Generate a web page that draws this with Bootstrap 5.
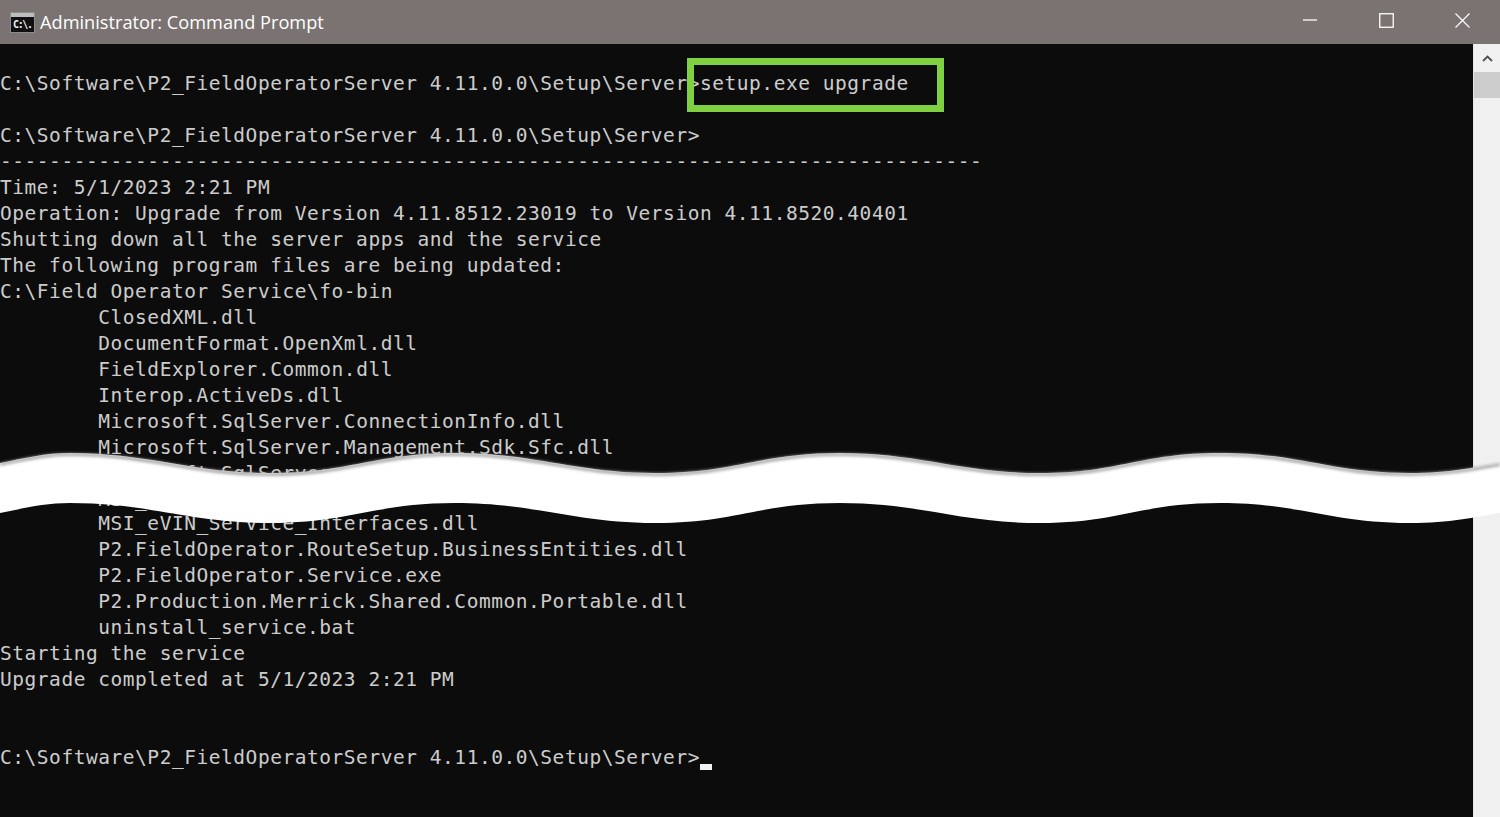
<!DOCTYPE html>
<html lang="en">
<head>
<meta charset="utf-8">
<title>Administrator: Command Prompt</title>
<link href="https://cdn.jsdelivr.net/npm/bootstrap@5.3.0/dist/css/bootstrap.min.css" rel="stylesheet">
<style>
html,body{height:100%;margin:0;background:#0c0c0c;overflow:hidden}
.cmd-window{width:1500px;height:817px}
.cmd-titlebar{height:44px;background:#7a7372;color:#fff;font-family:"Open Sans","Noto Sans",sans-serif;font-size:18.2px;line-height:44px}
.cmd-appicon{width:25px;height:21px;margin:0 5px 0 10px;display:block}
.cmd-ctl-box{width:76px;height:40px}
.cmd-main{height:773px;background:#0c0c0c}
.cmd-body{padding-top:1px}
.cmd-text{margin:0;padding:0;overflow:hidden;background:transparent;color:#cccccc;font-family:"DejaVu Sans Mono","Liberation Mono",monospace;font-size:19.5px;letter-spacing:.54px;line-height:26px;tab-size:8;white-space:pre}
.cmd-lower{margin-top:-2px}
.cmd-cursor{display:inline-block;width:12px;height:6px;background:#f2f2f2;vertical-align:-6px}
.cmd-scroll{width:27px;background:#f0f0f0;border-left:1px solid #e4e4e4}
.cmd-arrow{height:28px}
.cmd-thumb{height:26px;background:#cdcdcd}
.cmd-callout{position:absolute;left:687px;top:58px;width:257px;height:54px;border:7px solid #7fd141}
.cmd-tear{position:absolute;left:0;top:440px;width:1500px;height:100px}
</style>
</head>
<body>
<div class="cmd-window position-relative d-flex flex-column">
  <div class="cmd-titlebar d-flex align-items-center flex-shrink-0">
    <svg class="cmd-appicon" viewBox="0 0 25 21" aria-hidden="true">
      <rect x="0.5" y="0.5" width="24" height="20" fill="#111" stroke="#8c8c8c"/>
      <rect x="1" y="1" width="23" height="4" fill="#bdbdbd"/>
      <text x="3" y="16" fill="#f0f0f0" font-family="DejaVu Sans Mono" font-weight="bold" font-size="10" textLength="20">C:\.</text>
    </svg>
    <span class="flex-grow-1">Administrator: Command Prompt</span>
    <div class="d-flex align-self-start">
      <div class="cmd-ctl-box d-flex align-items-center justify-content-center"><svg width="14" height="14" viewBox="0 0 14 14"><path d="M0 7H14" stroke="#fff" stroke-width="1.3"/></svg></div>
      <div class="cmd-ctl-box d-flex align-items-center justify-content-center"><svg width="15" height="15" viewBox="0 0 15 15"><rect x=".75" y=".75" width="13.5" height="13.5" fill="none" stroke="#fff" stroke-width="1.3"/></svg></div>
      <div class="cmd-ctl-box d-flex align-items-center justify-content-center"><svg width="15" height="15" viewBox="0 0 15 15"><path d="M.5 .5L14.5 14.5M14.5 .5L.5 14.5" stroke="#fff" stroke-width="1.2"/></svg></div>
    </div>
  </div>
  <div class="cmd-main d-flex flex-grow-1">
    <div class="cmd-body flex-grow-1 overflow-hidden">
<pre class="cmd-text">

C:\Software\P2_FieldOperatorServer 4.11.0.0\Setup\Server&gt;setup.exe upgrade

C:\Software\P2_FieldOperatorServer 4.11.0.0\Setup\Server&gt;
--------------------------------------------------------------------------------
Time: 5/1/2023 2:21 PM
Operation: Upgrade from Version 4.11.8512.23019 to Version 4.11.8520.40401
Shutting down all the server apps and the service
The following program files are being updated:
C:\Field Operator Service\fo-bin
	ClosedXML.dll
	DocumentFormat.OpenXml.dll
	FieldExplorer.Common.dll
	Interop.ActiveDs.dll
	Microsoft.SqlServer.ConnectionInfo.dll
	Microsoft.SqlServer.Management.Sdk.Sfc.dll
	Microsoft.SqlServer.Smo.dll
	MSI_eVIN.Common.dll</pre>
<pre class="cmd-text cmd-lower">	MSI_eVIN_Service_Interfaces.dll
	P2.FieldOperator.RouteSetup.BusinessEntities.dll
	P2.FieldOperator.Service.exe
	P2.Production.Merrick.Shared.Common.Portable.dll
	uninstall_service.bat
Starting the service
Upgrade completed at 5/1/2023 2:21 PM


C:\Software\P2_FieldOperatorServer 4.11.0.0\Setup\Server&gt;<span class="cmd-cursor"></span></pre>
    </div>
    <div class="cmd-scroll flex-shrink-0 d-flex flex-column">
      <div class="cmd-arrow d-flex align-items-center justify-content-center"><svg width="11" height="7" viewBox="0 0 11 7"><path d="M1 6L5.5 1.5L10 6" fill="none" stroke="#505050" stroke-width="1.8"/></svg></div>
      <div class="cmd-thumb"></div>
    </div>
  </div>
  <div class="cmd-callout"></div>
  <svg class="cmd-tear" viewBox="0 440 1500 100" aria-hidden="true">
    <defs><filter id="tearblur" x="-2%" y="-50%" width="104%" height="200%"><feGaussianBlur stdDeviation="1.4"/></filter></defs>
    <path fill="#fff" d="M0 463C25 458 45 453 70 453C150 453 190 473 270 473C350 473 375 453 455 453C535 453 575 473 655 473C735 473 760 453 840 453C920 453 960 473 1040 473C1120 473 1140 453 1220 453C1300 453 1330 473 1410 473C1450 473 1475 467 1500 463V513C1475 517 1450 523 1410 523C1330 523 1300 503 1220 503C1140 503 1120 523 1040 523C960 523 920 503 840 503C760 503 735 523 655 523C575 523 535 503 455 503C375 503 350 523 270 523C190 523 150 503 70 503C45 503 25 508 0 513Z"/>
    <path fill="none" stroke="#9a9a9a" stroke-width="2.6" filter="url(#tearblur)" d="M0 464.5C25 459.5 45 454.5 70 454.5C150 454.5 190 474.5 270 474.5C350 474.5 375 454.5 455 454.5C535 454.5 575 474.5 655 474.5C735 474.5 760 454.5 840 454.5C920 454.5 960 474.5 1040 474.5C1120 474.5 1140 454.5 1220 454.5C1300 454.5 1330 474.5 1410 474.5C1450 474.5 1475 468.5 1500 464.5"/>
  </svg>
</div>
<script src="https://cdn.jsdelivr.net/npm/bootstrap@5.3.0/dist/js/bootstrap.bundle.min.js"></script>
</body>
</html>
